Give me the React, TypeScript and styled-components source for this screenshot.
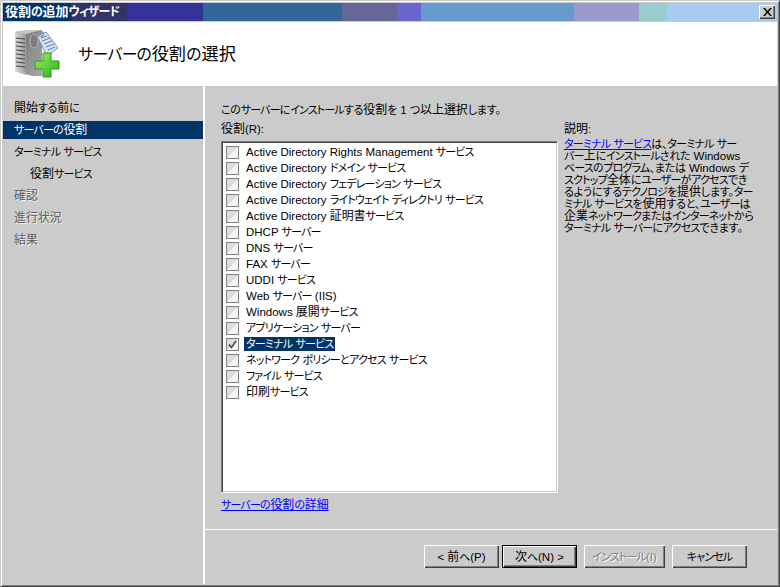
import React from "react";
import styled, { createGlobalStyle } from "styled-components";

const Global = createGlobalStyle`
  html, body { margin: 0; padding: 0; background: #cbcbcb; }
  * { box-sizing: border-box; }
`;

const FONT = `"Liberation Sans", "Noto Sans CJK JP", sans-serif`;

const Window = styled.div`
  width: 780px;
  height: 587px;
  display: flex;
  flex-direction: column;
  background: #cbcbcb;
  font: 11.5px/16px ${FONT};
  font-feature-settings: "palt";
  color: #000;
  border-style: solid;
  border-width: 1px;
  border-color: #cbcbcb #404040 #404040 #cbcbcb;
  padding: 2px;
  box-shadow: inset 1px 1px 0 #fff, inset -1px -1px 0 #808080;
  overflow: hidden;
`;

const Kanji = styled.span`
  font-size: 1.04em;
`;

const Hiragana = styled.span`
  font-size: 0.957em;
  letter-spacing: -0.02em;
`;

const Katakana = styled.span`
  font-size: 0.957em;
  letter-spacing: -0.075em;
`;

/* The reference's bitmap face has wide kanji and narrow kana: size each run on its own. */
const T = ({ children }: { children: string }) => (
  <>
    {children.split(/([\u4e00-\u9fff]+|[\u3040-\u309f、。]+|[\u30a0-\u30ff]+)/).map((run, i) => {
      if (!run) return null;
      if (/^[\u4e00-\u9fff]/.test(run)) return <Kanji key={i}>{run}</Kanji>;
      if (/^[\u3040-\u309f、。]/.test(run)) return <Hiragana key={i}>{run}</Hiragana>;
      if (/^[\u30a0-\u30ff]/.test(run)) return <Katakana key={i}>{run}</Katakana>;
      return <React.Fragment key={i}>{run}</React.Fragment>;
    })}
  </>
);

const TitleBar = styled.div`
  height: 18px;
  flex: none;
  display: flex;
  align-items: center;
  justify-content: space-between;
  padding: 0 2px 0 2px;
  background: linear-gradient(
    90deg,
    #003366 0 68px,
    #333366 68px 124px,
    #333399 124px 200px,
    #336699 200px 339px,
    #666699 339px 394px,
    #6666cc 394px 418px,
    #6699cc 418px 571px,
    #9999cc 571px 636px,
    #99cccc 636px 664px,
    #a6caf0 664px
  );
`;

const TitleText = styled.span`
  color: #fff;
  font-weight: 700;
  font-size: 12.5px;
  line-height: 16px;
`;

const CloseButton = styled.button`
  width: 16px;
  height: 14px;
  padding: 0;
  display: flex;
  align-items: center;
  justify-content: center;
  background: #cbcbcb;
  border: 0;
  box-shadow: inset 1px 1px 0 #fff, inset -1px -1px 0 #404040, inset -2px -2px 0 #808080;
`;

const Header = styled.div`
  height: 65px;
  flex: none;
  display: flex;
  align-items: center;
  background: #fff;
  border-top: 1px solid #cbcbcb;
  padding: 0 0 0 12px;
  gap: 17px;
`;

const HeaderTitle = styled.h1`
  margin: 0;
  font: 400 16.5px/20px ${FONT};
  color: #000;
`;

const Body = styled.div`
  flex: 1;
  min-height: 0;
  display: flex;
`;

const Sidebar = styled.nav`
  width: 200px;
  flex: none;
  padding-top: 11px;
  display: flex;
  flex-direction: column;
`;

const NavItem = styled.div<{ $active?: boolean; $disabled?: boolean; $indent?: boolean }>`
  height: ${(p) => (p.$active ? "18px" : "22px")};
  margin: ${(p) => (p.$active ? "2px 0" : "0")};
  display: flex;
  align-items: center;
  padding-left: ${(p) => (p.$indent ? "27px" : "11px")};
  background: ${(p) => (p.$active ? "#003366" : "transparent")};
  color: ${(p) => (p.$active ? "#fff" : p.$disabled ? "#5c5c5c" : "#000")};
  text-shadow: ${(p) => (p.$disabled ? "1px 1px 0 #f0f0f0" : "none")};
  white-space: pre;
`;

const Main = styled.div`
  flex: 1;
  min-width: 0;
  display: flex;
  flex-direction: column;
  border-left: 2px solid #fff;
`;

const Content = styled.div`
  flex: 1;
  min-height: 0;
  padding: 16px 0 0 16px;
`;

const Intro = styled.div`
  height: 17px;
`;

const Columns = styled.div`
  display: flex;
  gap: 6px;
  margin-top: 2px;
`;

const ListColumn = styled.div`
  width: 337px;
  flex: none;
`;

const Label = styled.div`
  height: 20px;
`;

const DescLabel = styled.div`
  height: 17px;
`;

const RoleList = styled.div`
  width: 337px;
  height: 352px;
  padding: 2px 0 0 4px;
  background: #fff;
  border: 1px solid;
  border-color: #808080 #fff #fff #808080;
  box-shadow: inset 1px 1px 0 #404040, inset -1px -1px 0 #cbcbcb;
`;

const RoleRow = styled.div`
  height: 16px;
  display: flex;
  align-items: center;
  gap: 5px;
`;

const Box = styled.span`
  width: 13px;
  height: 13px;
  flex: none;
  display: flex;
  align-items: center;
  justify-content: center;
  border: 1px solid #808080;
  background: linear-gradient(135deg, #dcdcdc 0 50%, #f4f4f4 50%);
`;

const RoleName = styled.span<{ $selected?: boolean }>`
  line-height: 14px;
  padding: 0 2px;
  white-space: pre;
  background: ${(p) => (p.$selected ? "#003366" : "transparent")};
  color: ${(p) => (p.$selected ? "#fff" : "#000")};
`;

const Link = styled.a`
  color: #0000ff;
  text-decoration: underline;
`;

const DetailLink = styled(Link)`
  display: block;
  margin-top: 4px;
`;

const Description = styled.div`
  width: 210px;
`;

const DescText = styled.p`
  margin: 0;
  line-height: 12px;
  white-space: pre;
`;

const Footer = styled.div`
  height: 55px;
  flex: none;
  display: flex;
  justify-content: flex-end;
  gap: 7px;
  padding: 15px 30px 0 0;
  border-top: 1px solid #fff;
`;

const Button = styled.button<{ $default?: boolean; $w: number }>`
  width: ${(p) => p.$w}px;
  height: 23px;
  padding: 0;
  background: #cbcbcb;
  font: 11.5px/16px ${FONT};
  font-feature-settings: "palt";
  white-space: pre;
  color: #000;
  border: ${(p) => (p.$default ? "1px solid #000" : "0")};
  box-shadow: inset 1px 1px 0 #fff, inset -1px -1px 0 #404040, inset -2px -2px 0 #808080;
  &:disabled {
    color: #808080;
    text-shadow: 1px 1px 0 #fff;
  }
`;

const ButtonGroup = styled.div`
  display: flex;
  gap: 3px;
`;

const roles = [
  "Active Directory Rights Management サービス",
  "Active Directory ドメイン サービス",
  "Active Directory フェデレーション サービス",
  "Active Directory ライトウェイト ディレクトリ サービス",
  "Active Directory 証明書サービス",
  "DHCP サーバー",
  "DNS サーバー",
  "FAX サーバー",
  "UDDI サービス",
  "Web サーバー (IIS)",
  "Windows 展開サービス",
  "アプリケーション サーバー",
  "ターミナル サービス",
  "ネットワーク ポリシーとアクセス サービス",
  "ファイル サービス",
  "印刷サービス",
];

const WizardIcon = () => (
  <svg width="46" height="50" viewBox="0 0 46 50" aria-hidden="true">
    <defs>
      <linearGradient id="front" x1="0" x2="1" y1="0" y2="0">
        <stop offset="0" stopColor="#d8d8d8" />
        <stop offset="1" stopColor="#9a9a9a" />
      </linearGradient>
      <linearGradient id="side" x1="0" x2="1" y1="0" y2="1">
        <stop offset="0" stopColor="#6e6e6e" />
        <stop offset="1" stopColor="#a8a8a8" />
      </linearGradient>
      <linearGradient id="plus" x1="0" x2="1" y1="0" y2="1">
        <stop offset="0" stopColor="#a6ee60" />
        <stop offset="1" stopColor="#22b016" />
      </linearGradient>
    </defs>
    <path d="M0 3 L14 1 L27 1 L27 47 L17 47 L0 42 Z" fill="url(#side)" />
    <path d="M0 3 L11 5 L11 46 L0 42 Z" fill="url(#front)" />
    <path d="M0 3 L14 1 L27 1 L11 5 Z" fill="#c8c8c8" />
    <path d="M1 9 L10 10 M1 13 L10 14 M1 17 L10 18 M1 21 L10 22 M1 25 L10 26 M1 29 L10 30 M1 33 L10 34 M1 37 L10 38" stroke="#444" strokeWidth="1.2" />
    <rect x="8" y="43" width="2" height="2" fill="#9be04a" />
    <ellipse cx="19" cy="12" rx="4" ry="7" fill="#7c7c7c" stroke="#b8b8b8" />
    <path d="M22 7 L31 3 L43 19 L32 27 Z" fill="#d4e2f2" stroke="#7c8fae" />
    <path d="M26 9 L32 7 M27 12 L35 9 M29 15 L37 12 M31 18 L39 15 M33 21 L40 18" stroke="#5f7ba6" strokeWidth="1" />
    <circle cx="26" cy="5" r="2.400" fill="none" stroke="#8899aa" strokeWidth="1.200" />
    <path d="M28 24 H36 V32 H44 V40 H36 V48 H28 V40 H20 V32 H28 Z" fill="url(#plus)" stroke="#2a9a18" strokeWidth="1" />
  </svg>
);

const description = [
  "バー上にインストールされた Windows",
  "ベースのプログラム、または Windows デ",
  "スクトップ全体にユーザーがアクセスでき",
  "るようにするテクノロジを提供します。ター",
  "ミナル サービスを使用すると、ユーザーは",
  "企業ネットワークまたはインターネットから",
  "ターミナル サーバーにアクセスできます。",
];

export default function App() {
  return (
    <>
      <Global />
      <Window>
        <TitleBar>
          <TitleText><T>役割の追加ウィザード</T></TitleText>
          <CloseButton aria-label="閉じる">
            <svg width="9" height="8" viewBox="0 0 9 8" aria-hidden="true">
              <path d="M0 0h2l2.500 3L7 0h2L5.500 4 9 8H7L4.500 5 2 8H0l3.500-4z" fill="#000" />
            </svg>
          </CloseButton>
        </TitleBar>
        <Header>
          <WizardIcon />
          <HeaderTitle><T>サーバーの役割の選択</T></HeaderTitle>
        </Header>
        <Body>
          <Sidebar>
            <NavItem><span><T>開始する前に</T></span></NavItem>
            <NavItem $active><span><T>サーバーの役割</T></span></NavItem>
            <NavItem><span><T>ターミナル サービス</T></span></NavItem>
            <NavItem $indent><span><T>役割サービス</T></span></NavItem>
            <NavItem $disabled><span><T>確認</T></span></NavItem>
            <NavItem $disabled><span><T>進行状況</T></span></NavItem>
            <NavItem $disabled><span><T>結果</T></span></NavItem>
          </Sidebar>
          <Main>
            <Content>
              <Intro><T>このサーバーにインストールする役割を 1 つ以上選択します。</T></Intro>
              <Columns>
                <ListColumn>
                  <Label><T>役割(R):</T></Label>
                  <RoleList>
                    {roles.map((r) => {
                      const checked = r === "ターミナル サービス";
                      return (
                        <RoleRow key={r}>
                          <Box>
                            {checked && (
                              <svg width="9" height="9" viewBox="0 0 9 9" aria-hidden="true">
                                <path d="M1 4.500 L3.500 7.500 L8 1" fill="none" stroke="#444" strokeWidth="1.600" />
                              </svg>
                            )}
                          </Box>
                          <RoleName $selected={checked}><T>{r}</T></RoleName>
                        </RoleRow>
                      );
                    })}
                  </RoleList>
                  <DetailLink href="#"><T>サーバーの役割の詳細</T></DetailLink>
                </ListColumn>
                <Description>
                  <DescLabel><T>説明:</T></DescLabel>
                  <DescText>
                    <Link href="#"><T>ターミナル サービス</T></Link><T>は、ターミナル サー</T>
                    {description.map((line) => (
                      <React.Fragment key={line}>
                        <br />
                        <T>{line}</T>
                      </React.Fragment>
                    ))}
                  </DescText>
                </Description>
              </Columns>
            </Content>
            <Footer>
              <ButtonGroup>
                <Button $w={75}><T>{"< 前へ(P)"}</T></Button>
                <Button $w={75} $default><T>{"次へ(N) >"}</T></Button>
              </ButtonGroup>
              <Button $w={81} disabled><T>インストール(I)</T></Button>
              <Button $w={75}><T>キャンセル</T></Button>
            </Footer>
          </Main>
        </Body>
      </Window>
    </>
  );
}
